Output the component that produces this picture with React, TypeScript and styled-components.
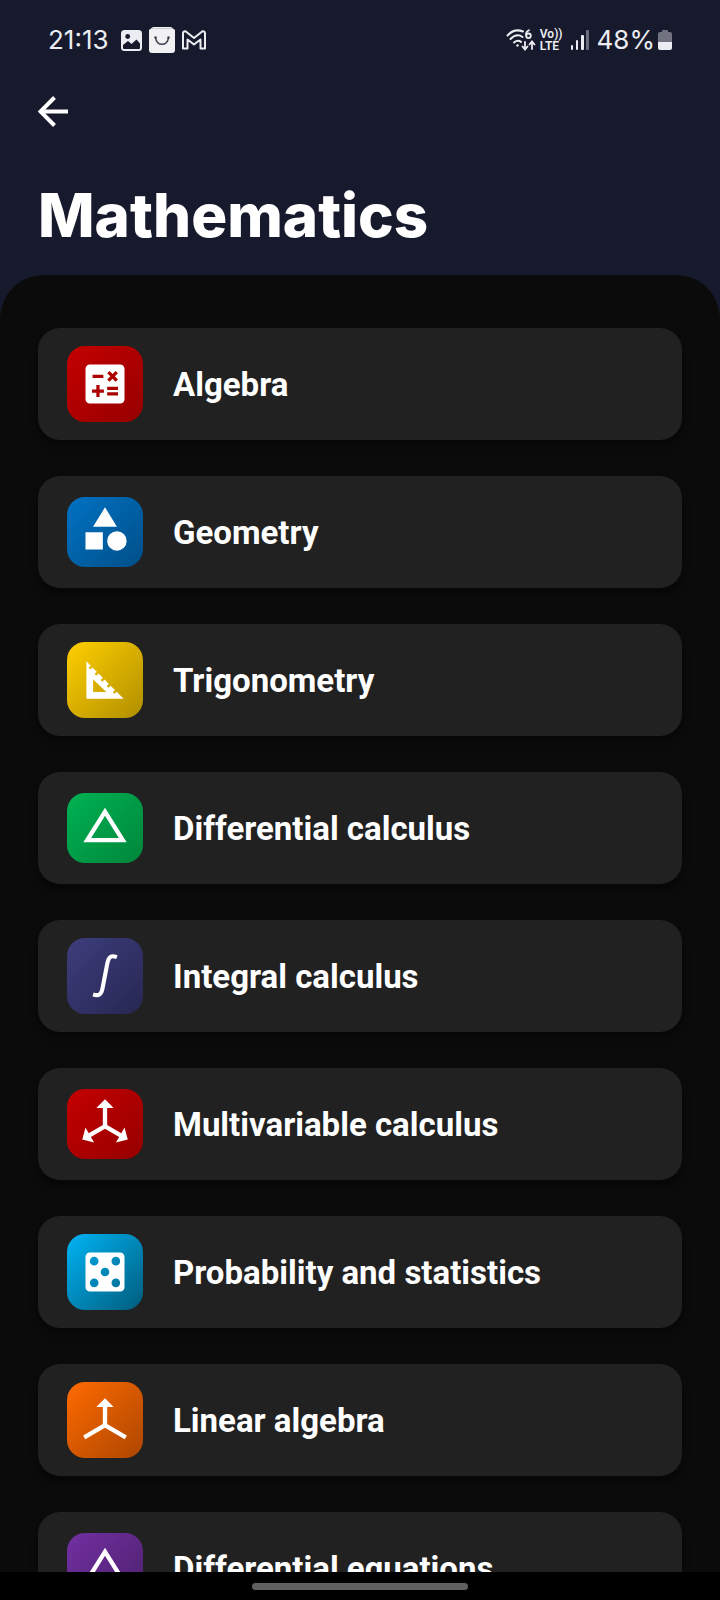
import React from 'react';
import styled, { createGlobalStyle } from 'styled-components';

const GlobalStyle = createGlobalStyle`
  *, *::before, *::after { box-sizing: border-box; }
  body {
    margin: 0;
    background: #000;
    color: #fff;
    font-family: Roboto, sans-serif;
  }
`;

const Screen = styled.div`
  display: flex;
  flex-direction: column;
  height: 100vh;
  background: #171a2d;
`;

const StatusBar = styled.div`
  display: flex;
  justify-content: space-between;
  align-items: center;
  flex: none;
  height: 80px;
  padding: 0 48px;
  color: #ecedf2;
`;

const StatusGroup = styled.div<{ $gap: number }>`
  display: flex;
  align-items: center;
  gap: ${(p) => p.$gap}px;
`;

const StatusText = styled.span`
  font: 400 26px/32px Inter, sans-serif;
`;

const NetworkLabel = styled.span`
  display: flex;
  flex-direction: column;
  font: 600 12px/12px Roboto, sans-serif;
`;

const Header = styled.header`
  display: flex;
  flex-direction: column;
  align-items: flex-start;
  flex: none;
  gap: 52px;
  padding: 15px 38px 24px;
`;

const BackButton = styled.button`
  display: flex;
  padding: 0;
  border: 0;
  background: none;
  color: inherit;
  cursor: pointer;
`;

const Title = styled.h1`
  margin: 0;
  font: 800 60px/72px Inter, sans-serif;
`;

const Panel = styled.main`
  flex: 1;
  min-height: 0;
  padding: 53px 38px 36px;
  overflow-y: auto;
  scrollbar-width: none;
  border-radius: 44px 44px 0 0;
  background: #0b0b0b;
`;

const TopicList = styled.ul`
  display: flex;
  flex-direction: column;
  gap: 36px;
  margin: 0;
  padding: 0;
  list-style: none;
`;

const TopicCard = styled.button`
  display: flex;
  align-items: center;
  gap: 30px;
  width: 100%;
  height: 112px;
  padding: 0 29px;
  border: 0;
  border-radius: 22px;
  background: #212121;
  box-shadow: 0 6px 8px rgba(0, 0, 0, 0.4);
  color: #fff;
  font: 700 33px/40px Roboto, sans-serif;
  text-align: left;
  cursor: pointer;
`;

const TopicName = styled.span`
  padding-top: 2px;
`;

const Tile = styled.span<{ $from: string; $to: string; $short?: boolean }>`
  display: flex;
  flex: none;
  padding: ${(p) => (p.$short ? '6px 12px 12px' : '12px')};
  border-radius: 18px;
  background: linear-gradient(135deg, ${(p) => p.$from}, ${(p) => p.$to});
`;

const Glyph = styled.svg`
  display: block;
  width: 52px;
  height: 52px;
  fill: #fff;
`;

const NavBar = styled.footer`
  display: flex;
  justify-content: center;
  align-items: center;
  flex: none;
  height: 28px;
  background: #000;
`;

const HomeHandle = styled.span`
  width: 30%;
  height: 7px;
  border-radius: 4px;
  background: #606060;
`;

const shapes = {
  calculator: (
    <path
      fillRule="evenodd"
      d="M19 3H5a2 2 0 0 0-2 2v14a2 2 0 0 0 2 2h14a2 2 0 0 0 2-2V5a2 2 0 0 0-2-2zM13.03 7.06L14.09 6l1.41 1.41L16.91 6l1.06 1.06-1.41 1.41 1.41 1.41-1.06 1.06-1.41-1.4-1.41 1.41-1.06-1.06 1.41-1.41-1.41-1.42zM6.25 7.72h5v1.5h-5v-1.5zM11.5 16h-2v2H8v-2H6v-1.5h2v-2h1.5v2h2V16zm6.5 1.25h-5v-1.5h5v1.5zm0-2.5h-5v-1.5h5v1.5z"
    />
  ),
  shapes: <path d="M11 13.5v8H3v-8h8M12 2l5.5 9h-11L12 2M17.5 13a4.5 4.5 0 1 1 0 9 4.5 4.5 0 0 1 0-9z" />,
  setSquare: (
    <path
      fillRule="evenodd"
      d="M3.4 3.4l2 2-1 1 .8.8 1-1 2 2-1 1 .8.8 1-1 2 2-1 1 .8.8 1-1 2 2-1 1 .8.8 1-1 2 2-1 1 .8.8 1-1 3.200 3.200H3.400zM6.500 11.600v5.900h6.100z"
    />
  ),
  delta: <path d="M12 7.77L18.39 18H5.61L12 7.77M12 4L2 20h20z" />,
  integral: (
    <path
      d="M6.5 20.5C9 21.3 10.300 20.900 10.900 17.500L13.100 6.100C13.800 2.700 15 2.400 17.500 3.300"
      fill="none"
      stroke="#fff"
      strokeWidth="1.9"
    />
  ),
  axes: (
    <path d="M12 2l4 4h-3v7.85l6.53 3.76L21 15.03l1.5 5.47-5.5 1.46 1.53-2.61L12 15.58l-6.53 3.77L7 21.96 1.5 20.5 3 15.03l1.47 2.58L11 13.85V6H8z" />
  ),
  axisZ: <path d="M12 2l4 4h-3v7.85l9.1 5.25-1 1.73L12 15.58l-9.1 5.25-1-1.73 9.1-5.25V6H8z" />,
  dice: (
    <path
      fillRule="evenodd"
      d="M5 3h14a2 2 0 0 1 2 2v14a2 2 0 0 1-2 2H5a2 2 0 0 1-2-2V5a2 2 0 0 1 2-2zM7 5a2 2 0 1 0 0 4 2 2 0 0 0 0-4zM17 15a2 2 0 1 0 0 4 2 2 0 0 0 0-4zM17 5a2 2 0 1 0 0 4 2 2 0 0 0 0-4zM12 10a2 2 0 1 0 0 4 2 2 0 0 0 0-4zM7 15a2 2 0 1 0 0 4 2 2 0 0 0 0-4z"
    />
  ),
};

interface Topic {
  name: string;
  shape: keyof typeof shapes;
  from: string;
  to: string;
  short?: boolean;
}

const topics: Topic[] = [
  { name: 'Algebra', shape: 'calculator', from: '#c40000', to: '#960000' },
  { name: 'Geometry', shape: 'shapes', from: '#0072c4', to: '#004f88', short: true },
  { name: 'Trigonometry', shape: 'setSquare', from: '#ffcf00', to: '#b08e00' },
  { name: 'Differential calculus', shape: 'delta', from: '#00b252', to: '#00863c', short: true },
  { name: 'Integral calculus', shape: 'integral', from: '#3d3d7c', to: '#272753' },
  { name: 'Multivariable calculus', shape: 'axes', from: '#c40000', to: '#960000', short: true },
  { name: 'Probability and statistics', shape: 'dice', from: '#00b4f4', to: '#005c7c' },
  { name: 'Linear algebra', shape: 'axisZ', from: '#ff6a00', to: '#ac4600' },
  { name: 'Differential equations', shape: 'delta', from: '#7230a2', to: '#4c206c', short: true },
];

const PhotoIcon = () => (
  <svg width="21" height="21" viewBox="0 0 21 21">
    <rect width="21" height="21" rx="3.5" fill="currentColor" />
    <circle cx="6.700" cy="6.500" r="2.400" fill="#171a2d" />
    <path d="M2 15l5-4 3.500 3L15.500 9.500 19 13.500V18q0 1-1 1H3q-1 0-1-1z" fill="#171a2d" />
  </svg>
);

const BagIcon = () => (
  <svg width="26" height="26" viewBox="0 0 26 26">
    <path d="M4 0h18l4 3v20q0 3-3 3H3q-3 0-3-3V3z" fill="#f1f1f3" />
    <path d="M2 1.500h22" stroke="#c9cad0" strokeWidth="1" />
    <path d="M6.500 10.500c1 9 12 9 13 0" fill="none" stroke="#3c3d4c" strokeWidth="1.600" />
    <circle cx="6.500" cy="10.500" r="1.200" fill="#3c3d4c" />
    <circle cx="19.500" cy="10.500" r="1.200" fill="#3c3d4c" />
  </svg>
);

const MailIcon = () => (
  <svg width="24" height="20" viewBox="0 0 24 20" fill="none" stroke="currentColor" strokeWidth="2" strokeLinejoin="round">
    <path d="M1 3.500Q1 1 3.500 1.200L12 8 20.500 1.200Q23 1 23 3.500V18.500h-4.500V9.500L12 14.500 5.500 9.500V18.500H1z" />
  </svg>
);

const WifiIcon = () => (
  <svg width="30" height="22" viewBox="0 0 30 22" fill="none" stroke="currentColor" strokeWidth="2" strokeLinecap="round">
    <path d="M1.500 6.500C6 1.500 12 .5 17 2.500M4.500 10c4-4 8.500-4.500 12-2M8 13.500c2.500-2 5-2.200 7-.6" />
    <circle cx="11.500" cy="16.500" r="1.200" fill="currentColor" stroke="none" />
    <path d="M23 1.200c-2.200 1-3.200 3-3 5" strokeWidth="1.800" />
    <circle cx="22.500" cy="6.800" r="2.300" strokeWidth="1.800" />
    <path d="M19 13v7m-2.500-2.500L19 20.500l2.500-3M26 20v-7m-2.500 2.500L26 12.500l2.500 3" strokeWidth="1.800" />
  </svg>
);

const SignalIcon = () => (
  <svg width="18" height="20" viewBox="0 0 18 20" fill="currentColor">
    <rect x="0" y="15" width="2" height="5" rx="1" />
    <rect x="5" y="10" width="2" height="10" rx="1" />
    <rect x="10" y="5" width="3" height="15" rx="1" />
    <rect x="15" y="0" width="3" height="20" rx="1" opacity="0.4" />
  </svg>
);

const BatteryIcon = () => (
  <svg width="14" height="20" viewBox="0 0 14 20" fill="currentColor">
    <path d="M4 2V1q0-1 1-1h4q1 0 1 1v1h2q2 0 2 2v8H0V4q0-2 2-2z" opacity="0.42" />
    <path d="M0 12h14v6q0 2-2 2H2q-2 0-2-2z" />
  </svg>
);

const BackArrow = () => (
  <svg width="31" height="32" viewBox="0 0 31 32" fill="none" stroke="currentColor" strokeWidth="4">
    <path d="M30 16.500H3M16.500 2.500l-14 14 14 14" />
  </svg>
);

export default function App() {
  return (
    <>
      <GlobalStyle />
      <Screen>
        <StatusBar>
          <StatusGroup $gap={12}>
            <StatusText>21:13</StatusText>
            <StatusGroup $gap={7}>
              <PhotoIcon />
              <BagIcon />
              <MailIcon />
            </StatusGroup>
          </StatusGroup>
          <StatusGroup $gap={8}>
            <StatusGroup $gap={4}>
              <WifiIcon />
              <NetworkLabel>
                <span>Vo))</span>
                <span>LTE</span>
              </NetworkLabel>
            </StatusGroup>
            <SignalIcon />
            <StatusGroup $gap={3}>
              <StatusText>48%</StatusText>
              <BatteryIcon />
            </StatusGroup>
          </StatusGroup>
        </StatusBar>
        <Header>
          <BackButton type="button" aria-label="Back">
            <BackArrow />
          </BackButton>
          <Title>Mathematics</Title>
        </Header>
        <Panel>
          <TopicList>
            {topics.map((topic) => (
              <li key={topic.name}>
                <TopicCard type="button">
                  <Tile $from={topic.from} $to={topic.to} $short={topic.short}>
                    <Glyph viewBox="0 0 24 24" aria-hidden="true">
                      {shapes[topic.shape]}
                    </Glyph>
                  </Tile>
                  <TopicName>{topic.name}</TopicName>
                </TopicCard>
              </li>
            ))}
          </TopicList>
        </Panel>
        <NavBar>
          <HomeHandle />
        </NavBar>
      </Screen>
    </>
  );
}
